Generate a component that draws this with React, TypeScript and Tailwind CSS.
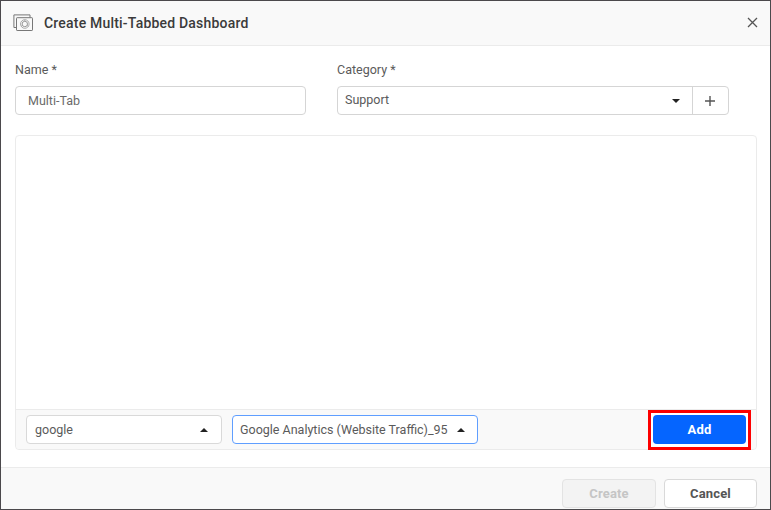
function Caret({ up = false }: { up?: boolean }) {
  return (
    <svg width="8" height="4" viewBox="0 0 8 4" className="shrink-0" fill="#222">
      <path d={up ? 'M0 4L4 0L8 4Z' : 'M0 0H8L4 4Z'} />
    </svg>
  );
}

function DashboardIcon() {
  return (
    <svg width="20" height="18" viewBox="0 0 20 18" fill="none" stroke="#777" strokeWidth="1">
      <path d="M3.5 13.5H.9V.9H17V3.5" />
      <rect x="3.5" y="3.7" width="16" height="12.8" rx="0.6" />
      <circle cx="11.8" cy="10" r="4.3" stroke="#aaa" />
      <circle cx="11.8" cy="10" r="2.7" stroke="#999" />
      <path d="M11.8 5.8V7.4M8.1 12.2L9.4 11.4M15.5 12.2L14.2 11.4" stroke="#aaa" />
    </svg>
  );
}

export default function App() {
  return (
    <div className="flex h-[510px] w-[771px] flex-col overflow-hidden border border-[#4b494c] bg-white font-['Roboto',sans-serif] text-[12.5px] leading-4 text-[#5a5a5a]">
      <header className="flex h-[45px] shrink-0 items-center border-b border-[#ebebeb] bg-[#f9f9f9] px-[12px]">
        <DashboardIcon />
        <h1 className="ml-[11px] text-[14px] font-medium tracking-[0.2px] text-[#3b3b3b]">Create Multi-Tabbed Dashboard</h1>
        <button className="mb-[2px] ml-auto" aria-label="Close">
          <svg width="11" height="11" viewBox="0 0 11 11" stroke="#555" strokeWidth="1.3">
            <path d="M1 1L10 10M10 1L1 10" />
          </svg>
        </button>
      </header>

      <main className="flex h-[421px] shrink-0 flex-col px-[14px] pt-[16px]">
        <div className="flex gap-[31px]">
          <div className="w-[291px]">
            <div className="h-[24px]">Name *</div>
            <div className="flex h-[29px] items-center rounded border border-[#d5d5d5] pl-[12px] text-[#6a6a6a]">Multi-Tab</div>
          </div>
          <div className="w-[392px]">
            <div className="h-[24px]">Category *</div>
            <div className="flex h-[29px] rounded border border-[#d5d5d5]">
              <div className="flex w-[355px] items-center justify-between border-r border-[#d5d5d5] pr-[12px] pl-[7px]">
                <span className="pb-px">Support</span>
                <Caret />
              </div>
              <button className="flex flex-1 items-center justify-center pr-px" aria-label="Add category">
                <svg width="10" height="10" viewBox="0 0 10 10" stroke="#555" strokeWidth="1.4">
                  <path d="M0 5H10M5 0V10" />
                </svg>
              </button>
            </div>
          </div>
        </div>

        <section className="mt-[20px] flex h-[315px] w-[742px] flex-col rounded border border-[#ebebeb]">
          <div className="flex-1" />
          <div className="flex h-[40px] items-center rounded-b border-t border-[#ebebeb] bg-[#f9f9f9] pl-[10px] pr-[5px]">
            <div className="flex h-[29px] w-[196px] items-center justify-between rounded border border-[#d9d9d9] bg-white pr-[13px] pl-[8px]">
              <span>google</span>
              <Caret up />
            </div>
            <div className="ml-[10px] flex h-[29px] w-[246px] items-center justify-between rounded border border-[#5f9eff] bg-white pr-[12px] pl-[7px]">
              <span className="whitespace-nowrap">Google Analytics (Website Traffic)_95</span>
              <Caret up />
            </div>
            <div className="ml-auto flex h-[40px] w-[103px] shrink-0 items-start justify-center self-start border-[3px] border-[#fd0000] bg-white pt-[2px]">
              <button className="h-[29px] w-[93px] rounded bg-[#0565ff] pt-px text-[13px] font-bold tracking-[0.2px] text-white">Add</button>
            </div>
          </div>
        </section>
      </main>

      <footer className="flex h-[42px] shrink-0 justify-end gap-[8px] border-t border-[#ebebeb] bg-[#f9f9f9] pt-[11px] pr-[13px] text-[13px] font-bold tracking-[0.15px]">
        <button className="h-[29px] w-[94px] rounded border border-[#e3e3e3] bg-[#f3f3f3] text-[#c5c5c5]">Create</button>
        <button className="h-[29px] w-[93px] rounded border border-[#d9d9d9] bg-white text-[#555]">Cancel</button>
      </footer>
    </div>
  );
}
